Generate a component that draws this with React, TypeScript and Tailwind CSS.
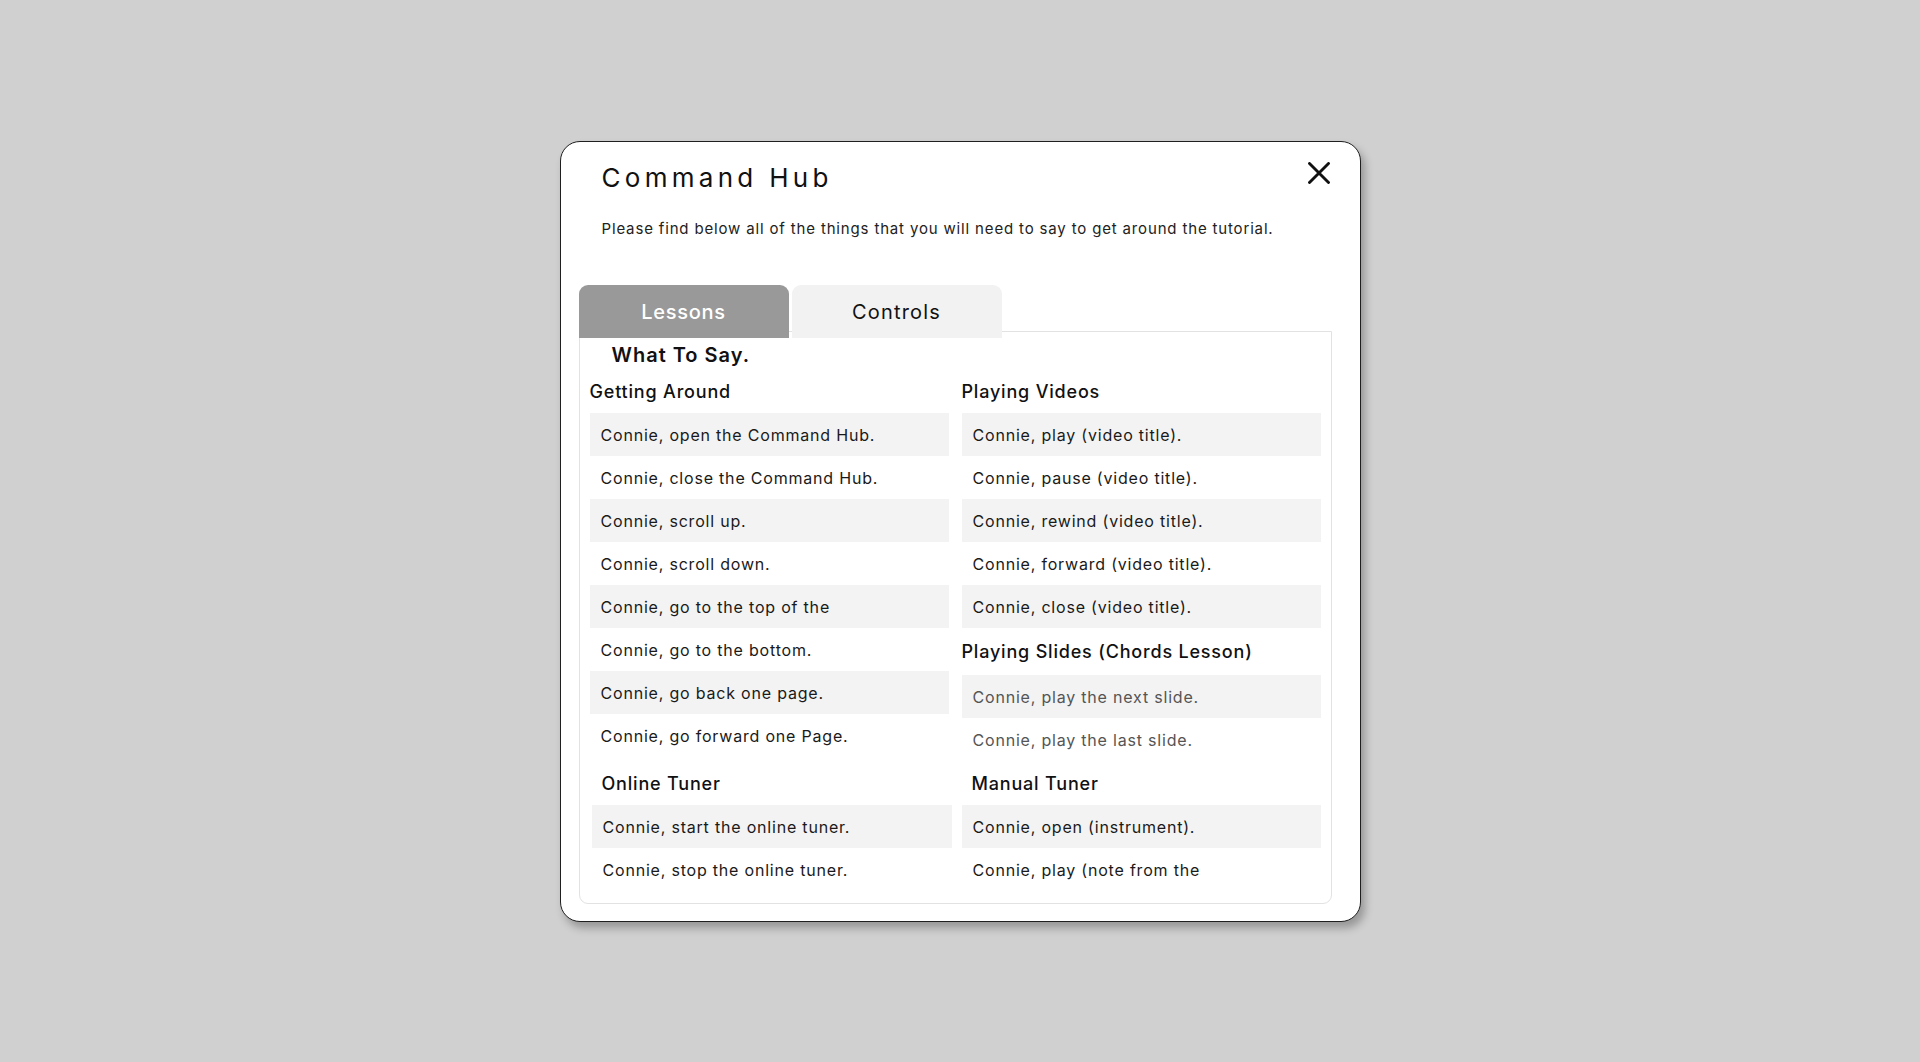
import React from "react";

const F = { fontFamily: "Inter, 'Noto Sans', sans-serif" };

function Row({ text, shaded, muted }: { text: string; shaded?: boolean; muted?: boolean }) {
  return (
    <div
      className={`h-[43px] flex items-center pl-[11px] text-[16px] tracking-[0.05em] ${shaded ? "bg-[#f3f3f3]" : ""} ${muted ? "text-[#555]" : "text-[#1a1a1a]"}`}
    >
      {text}
    </div>
  );
}

function Heading({ text, h, indent }: { text: string; h: string; indent?: string }) {
  return (
    <div className={`${h} flex items-center ${indent ?? ""} text-[18px] tracking-[0.045em] font-medium text-[#111]`}>{text}</div>
  );
}

export default function App() {
  return (
    <div className="w-full h-screen bg-[#d0d0d0] flex items-center justify-center" style={F}>
      <div className="relative w-[801px] h-[781px] bg-white border border-[#1f1f1f] rounded-[20px] shadow-[4px_6px_8px_rgba(0,0,0,0.28)] pl-[18px] pr-[28px]">
        <button className="absolute right-[30px] top-[20px] w-[22px] h-[22px]" aria-label="close">
          <svg viewBox="0 0 22 22" width="22" height="22">
            <path d="M1.5 1.5 L20.5 20.5 M20.5 1.5 L1.5 20.5" stroke="#111" strokeWidth="2.9" strokeLinecap="round" />
          </svg>
        </button>
        <div className="pl-[23px] pt-[18px]">
          <h1 className="text-[26px] h-[36px] leading-[36px] tracking-[0.165em] text-[#111] font-normal">Command Hub</h1>
          <p className="mt-[22px] text-[15px] tracking-[0.056em] text-[#222]">
            Please find below all of the things that you will need to say to get around the tutorial.
          </p>
        </div>
        <div className="mt-[45px] flex gap-[3px] relative z-10 mb-[-7px]">
          <div className="w-[210px] h-[53px] rounded-t-[9px] bg-[#999999] text-white text-[20px] tracking-[0.035em] font-medium flex items-center justify-center">
            Lessons
          </div>
          <div className="w-[210px] h-[53px] rounded-t-[9px] bg-[#f2f2f2] text-[#111] text-[20px] tracking-[0.06em] flex items-center justify-center">
            Controls
          </div>
        </div>
        <div className="w-[753px] h-[573px] border border-[#e2e2e2] rounded-b-[9px] overflow-hidden px-[10px]">
          <div className="relative z-20 h-[38px] flex items-end pl-[22px] text-[20px] tracking-[0.05em] font-semibold text-[#111]">What To Say.</div>
          <div className="grid grid-cols-2 gap-x-[13px]">
            <div>
              <Heading text="Getting Around" h="h-[43px]" />
              <Row text="Connie, open the Command Hub." shaded />
              <Row text="Connie, close the Command Hub." />
              <Row text="Connie, scroll up." shaded />
              <Row text="Connie, scroll down." />
              <Row text="Connie, go to the top of the" shaded />
              <Row text="Connie, go to the bottom." />
              <Row text="Connie, go back one page." shaded />
              <Row text="Connie, go forward one Page." />
              <div className="ml-[2px] mr-[-3px]">
                <Heading text="Online Tuner" h="h-[48px] pt-[4px]" indent="pl-[10px]" />
                <Row text="Connie, start the online tuner." shaded />
                <Row text="Connie, stop the online tuner." />
              </div>
            </div>
            <div>
              <Heading text="Playing Videos" h="h-[43px]" />
              <Row text="Connie, play (video title)." shaded />
              <Row text="Connie, pause (video title)." />
              <Row text="Connie, rewind (video title)." shaded />
              <Row text="Connie, forward (video title)." />
              <Row text="Connie, close (video title)." shaded />
              <Heading text="Playing Slides (Chords Lesson)" h="h-[47px]" />
              <Row text="Connie, play the next slide." shaded muted />
              <Row text="Connie, play the last slide." muted />
              <Heading text="Manual Tuner" h="h-[44px]" indent="pl-[10px]" />
              <Row text="Connie, open (instrument)." shaded />
              <Row text="Connie, play (note from the" />
            </div>
          </div>
        </div>
      </div>
    </div>
  );
}
